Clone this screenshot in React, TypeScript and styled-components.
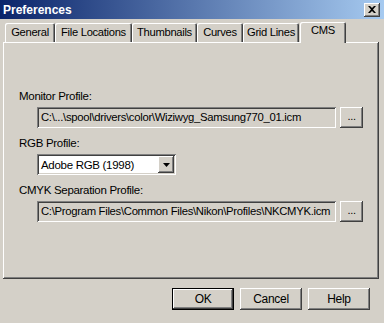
import React from 'react'
import styled, { createGlobalStyle } from 'styled-components'

const GlobalStyle = createGlobalStyle`
  html, body {
    margin: 0;
    padding: 0;
    background: #d4d0c8;
  }
  body {
    font-family: "Liberation Sans", Arial, sans-serif;
    font-size: 11px;
    letter-spacing: -0.3px;
    color: #000;
  }
`

const raised = `
  box-shadow: inset -1px -1px 0 #404040, inset 1px 1px 0 #ffffff,
    inset -2px -2px 0 #808080, inset 2px 2px 0 #d4d0c8;
`

const sunken = `
  box-shadow: inset 1px 1px 0 #808080, inset -1px -1px 0 #ffffff,
    inset 2px 2px 0 #404040, inset -2px -2px 0 #d4d0c8;
`

const tabs = [
  { name: 'General', width: 50 },
  { name: 'File Locations', width: 77 },
  { name: 'Thumbnails', width: 65 },
  { name: 'Curves', width: 46 },
  { name: 'Grid Lines', width: 56 },
  { name: 'CMS', width: 46 },
]

const App: React.FC = () => {
  return (
    <Window>
      <GlobalStyle />
      <TitleBar>
        <Title>Preferences</Title>
        <CloseButton>
          <svg width="8" height="7" viewBox="0 0 8 7">
            <path d="M0 0h2l2 2 2-2h2L5 3.5 8 7H6L4 5 2 7H0l3-3.5z" fill="#000" />
          </svg>
        </CloseButton>
      </TitleBar>

      <TabRow>
        {tabs.map((t) => (
          <Tab key={t.name} active={t.name === 'CMS'} w={t.width}>
            {t.name}
          </Tab>
        ))}
      </TabRow>

      <Panel>
        <Group>
          <Label>Monitor Profile:</Label>
          <FieldRow>
            <PathField>C:\...\spool\drivers\color\Wiziwyg_Samsung770_01.icm</PathField>
            <Browse>...</Browse>
          </FieldRow>
        </Group>
        <Group>
          <Label>RGB Profile:</Label>
          <FieldRow>
            <Select>
              <SelectText>Adobe RGB (1998)</SelectText>
              <DropButton>
                <svg width="7" height="4" viewBox="0 0 7 4">
                  <path d="M0 0h7L3.5 4z" fill="#000" />
                </svg>
              </DropButton>
            </Select>
          </FieldRow>
        </Group>
        <Group>
          <Label>CMYK Separation Profile:</Label>
          <FieldRow>
            <PathField>C:\Program Files\Common Files\Nikon\Profiles\NKCMYK.icm</PathField>
            <Browse>...</Browse>
          </FieldRow>
        </Group>
      </Panel>

      <Footer>
        <Button primary>OK</Button>
        <Button>Cancel</Button>
        <Button>Help</Button>
      </Footer>
    </Window>
  )
}

const Window = styled.div`
  width: 384px;
  height: 323px;
  background: #d4d0c8;
  display: flex;
  flex-direction: column;
  overflow: hidden;
`

const TitleBar = styled.div`
  height: 19px;
  display: flex;
  align-items: center;
  justify-content: space-between;
  padding: 0 4px 0 3px;
  background: linear-gradient(to right, #0a246a, #a6caf0);
`

const Title = styled.div`
  color: #fff;
  font-weight: 700;
  font-size: 12px;
  letter-spacing: 0;
`

const CloseButton = styled.div`
  width: 16px;
  height: 14px;
  background: #d4d0c8;
  display: flex;
  align-items: center;
  justify-content: center;
  ${raised}
`

const TabRow = styled.div`
  display: flex;
  align-items: flex-end;
  height: 23px;
  padding-left: 5px;
`

const Tab = styled.div<{ active?: boolean; w: number }>`
  width: ${(p) => p.w}px;
  box-sizing: border-box;
  height: ${(p) => (p.active ? 21 : 19)}px;
  line-height: ${(p) => (p.active ? 17 : 19)}px;
  margin-left: ${(p) => (p.active ? 1 : 0)}px;
  margin-bottom: ${(p) => (p.active ? -1 : 0)}px;
  text-align: center;
  white-space: nowrap;
  position: relative;
  z-index: ${(p) => (p.active ? 2 : 1)};
  background: #d4d0c8;
  font-size: 11.2px;
  border-radius: 2px 2px 0 0;
  box-shadow: inset 1px 1px 0 #ffffff, inset -1px 0 0 #404040, inset -2px 0 0 #808080;
`

const Panel = styled.div`
  margin: 0 5px 0 3px;
  height: 237px;
  box-sizing: border-box;
  padding: 47px 16px 0 16px;
  display: flex;
  flex-direction: column;
  gap: 8px;
  ${raised}
`

const Group = styled.div`
  display: flex;
  flex-direction: column;
  gap: 4px;
`

const Label = styled.div`
  font-size: 11.5px;
  line-height: 14px;
`

const FieldRow = styled.div`
  display: flex;
  gap: 4px;
  padding-left: 18px;
`

const PathField = styled.div`
  width: 302px;
  height: 21px;
  box-sizing: border-box;
  padding: 0 4px;
  line-height: 21px;
  font-size: 11.3px;
  white-space: nowrap;
  overflow: hidden;
  ${sunken}
`

const Browse = styled.div`
  width: 23px;
  height: 21px;
  box-sizing: border-box;
  text-align: center;
  line-height: 19px;
  font-size: 11px;
  ${raised}
`

const Select = styled.div`
  width: 139px;
  height: 21px;
  box-sizing: border-box;
  background: #fff;
  display: flex;
  align-items: center;
  padding: 2px;
  ${sunken}
`

const SelectText = styled.div`
  flex: 1;
  font-size: 11.5px;
  padding-left: 2px;
`

const DropButton = styled.div`
  width: 16px;
  height: 17px;
  background: #d4d0c8;
  display: flex;
  align-items: center;
  justify-content: center;
  ${raised}
`

const Footer = styled.div`
  display: flex;
  justify-content: flex-end;
  gap: 6px;
  padding: 9px 14px 0 0;
`

const Button = styled.div<{ primary?: boolean }>`
  width: 62px;
  height: 22px;
  box-sizing: border-box;
  text-align: center;
  line-height: 22px;
  font-size: 12px;
  ${(p) =>
    p.primary
      ? `box-shadow: inset 0 0 0 1px #000, inset -2px -2px 0 #404040, inset 2px 2px 0 #ffffff, inset -3px -3px 0 #808080;`
      : raised}
`

export default App
